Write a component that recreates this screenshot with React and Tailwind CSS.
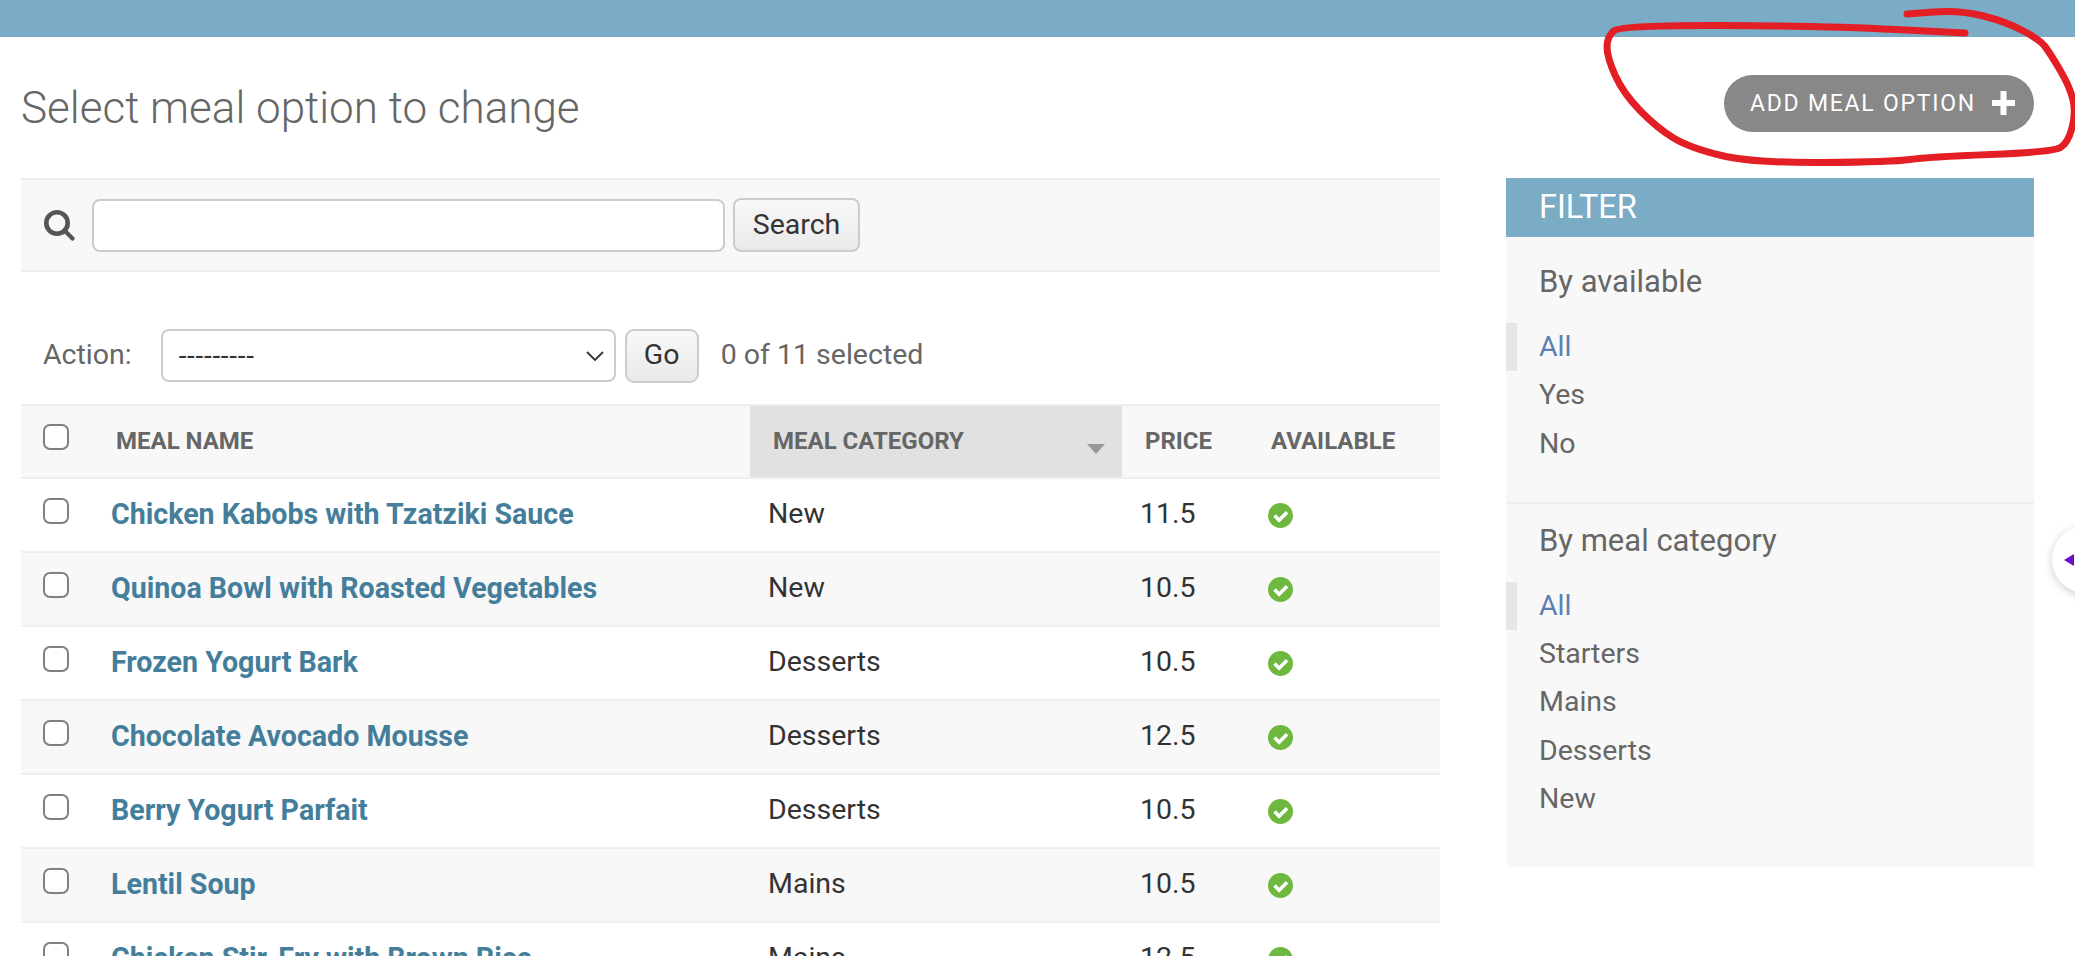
const rows = [
  ["Chicken Kabobs with Tzatziki Sauce", "New", "11.5"],
  ["Quinoa Bowl with Roasted Vegetables", "New", "10.5"],
  ["Frozen Yogurt Bark", "Desserts", "10.5"],
  ["Chocolate Avocado Mousse", "Desserts", "12.5"],
  ["Berry Yogurt Parfait", "Desserts", "10.5"],
  ["Lentil Soup", "Mains", "10.5"],
  ["Chicken Stir-Fry with Brown Rice", "Mains", "12.5"],
];

const filters = [
  { title: "By available", items: ["All", "Yes", "No"] },
  { title: "By meal category", items: ["All", "Starters", "Mains", "Desserts", "New"] },
];

function CheckIcon() {
  return (
    <svg width="25" height="25" viewBox="0 0 25 25" className="block">
      <circle cx="12.5" cy="12.5" r="12.5" fill="#6fb83f" />
      <path d="M6.5 12.6l4.6 4.6 8-8" fill="none" stroke="#fff" strokeWidth="3.6" />
    </svg>
  );
}

function Checkbox() {
  return <input type="checkbox" className="block appearance-none w-[26px] h-[26px] bg-white border-2 border-[#808080] rounded-[7px]" />;
}

function FilterGroup({ title, items, last }) {
  return (
    <div className={last ? "pt-[19px] pb-[44px]" : "pt-[27px] pb-[34px] border-b-2 border-[#eeeeee]"}>
      <h3 className="pl-[33px] text-[#666666] text-[31px] leading-[36px]">{title}</h3>
      <ul className="mt-[23px]">
        {items.map((item, i) => (
          <li
            key={item}
            className={
              i === 0
                ? "h-[48.3px] pl-[22px] border-l-[11px] border-[#e6e6e6] text-[#5b80b2] text-[28.5px] leading-[48px]"
                : "h-[48.3px] pl-[33px] text-[#666666] text-[28.5px] leading-[48px]"
            }
          >
            {item}
          </li>
        ))}
      </ul>
    </div>
  );
}

export default function App() {
  return (
    <div className="relative h-[956px] w-[2075px] overflow-hidden bg-white font-['Roboto',sans-serif] text-[#333333]">
      <div className="h-[37px] bg-[#7aacc6]" />

      <div className="flex h-[141px] items-start justify-between pl-[21px] pr-[41px]">
        <h1 className="mt-[48px] text-[44px] leading-[46px] font-light text-[#666666]">Select meal option to change</h1>
        <a className="mt-[38px] flex h-[57px] w-[310px] items-center rounded-full bg-[#888888] pl-[26px] pt-[2px] text-[23px] tracking-[1.75px] text-white">
          ADD MEAL OPTION
          <svg width="23" height="24" viewBox="0 0 23 24" className="ml-[16px] -mt-[4px]">
            <path d="M8.5 0h6v9h8.5v6h-8.5v9h-6v-9H0V9h8.5z" fill="#fff" />
          </svg>
        </a>
      </div>

      <div className="flex items-start justify-between pl-[21px] pr-[41px]">
        <div className="w-[1419px] shrink-0">
          <div className="flex h-[94px] items-center border-y-2 border-[#eeeeee] bg-[#f8f8f8] pl-[23px]">
            <svg width="31" height="31" viewBox="0 0 31 31" className="mt-[1px]">
              <circle cx="13" cy="13" r="10.7" fill="none" stroke="#555555" strokeWidth="4.6" />
              <path d="M20.5 20.5l8 8" fill="none" stroke="#555555" strokeWidth="4.2" strokeLinecap="round" />
            </svg>
            <input className="ml-[17px] h-[53px] w-[633px] rounded-[8px] border-2 border-[#cccccc] bg-white" />
            <button className="ml-[8px] h-[54px] w-[127px] rounded-[8px] border-2 border-[#cccccc] bg-gradient-to-b from-[#f8f8f8] to-[#e9e9e9] text-[28.5px] text-[#333333]">
              Search
            </button>
          </div>

          <div className="flex h-[132px] items-center pt-[35px] pl-[22px]">
            <span className="text-[28.5px] text-[#666666]">Action:</span>
            <div className="relative ml-[29px]">
              <select className="block h-[53px] w-[455px] appearance-none rounded-[8px] border-2 border-[#cccccc] bg-white pl-[16px] text-[28px] tracking-[0.7px] text-[#333333]">
                <option>---------</option>
              </select>
              <svg width="18" height="10" viewBox="0 0 18 10" className="absolute right-[12px] top-[22px]">
                <path d="M1 1l8 8 8-8" fill="none" stroke="#333333" strokeWidth="1.8" />
              </svg>
            </div>
            <button className="ml-[9px] h-[54px] w-[74px] rounded-[9px] border-2 border-[#cccccc] bg-gradient-to-b from-[#f8f8f8] to-[#e9e9e9] text-[28.5px] text-[#333333]">
              Go
            </button>
            <span className="ml-[22px] text-[28.5px] text-[#666666]">0 of 11 selected</span>
          </div>

          <table className="w-[1419px] table-fixed border-collapse">
            <colgroup>
              <col className="w-[69px]" />
              <col className="w-[660px]" />
              <col className="w-[372px]" />
              <col className="w-[128px]" />
              <col className="w-[190px]" />
            </colgroup>
            <thead>
              <tr className="h-[73px] border-y-2 border-[#eeeeee] bg-[#f8f8f8] text-left text-[24px] font-bold text-[#666666]">
                <th className="pl-[22px] align-middle">
                  <div className="-mt-[9px]"><Checkbox /></div>
                </th>
                <th className="pl-[26px] pb-[2px] font-bold">MEAL NAME</th>
                <th className="relative bg-[#e1e1e1] pl-[23px] pb-[2px] font-bold">
                  MEAL CATEGORY
                  <svg width="18" height="10" viewBox="0 0 18 10" className="absolute left-[337px] top-[38px]">
                    <path d="M0 0h18L9 10z" fill="#999999" />
                  </svg>
                </th>
                <th className="pl-[23px] pb-[2px] font-bold">PRICE</th>
                <th className="pl-[21px] pb-[2px] font-bold">AVAILABLE</th>
              </tr>
            </thead>
            <tbody>
              {rows.map((row, i) => (
                <tr key={row[0]} className={i % 2 === 0 ? "h-[74px] border-b-2 border-[#eeeeee] bg-white" : "h-[74px] border-b-2 border-[#eeeeee] bg-[#f8f8f8]"}>
                  <td className="pl-[22px]">
                    <div className="-mt-[8px]"><Checkbox /></div>
                  </td>
                  <td className="pl-[21px] pb-[2px] text-[28.6px] font-bold text-[#447e9b]">{row[0]}</td>
                  <td className="pl-[18px] pb-[2px] text-[28.5px]">{row[1]}</td>
                  <td className="pl-[18px] pb-[2px] text-[28.5px]">{row[2]}</td>
                  <td className="pl-[18px]"><CheckIcon /></td>
                </tr>
              ))}
            </tbody>
          </table>
        </div>

        <aside className="w-[528px] shrink-0 bg-[#f8f8f8]">
          <h2 className="flex h-[59px] items-center bg-[#7aacc6] pl-[33px] text-[32.5px] text-white">FILTER</h2>
          {filters.map((group, i) => (
            <FilterGroup key={group.title} title={group.title} items={group.items} last={i === filters.length - 1} />
          ))}
        </aside>
      </div>

      {/* side widget + red marker stroke sit on top of the page */}
      <div className="absolute left-[2052px] top-[526px] flex h-[67px] w-[67px] items-center rounded-full bg-white pl-[12px] shadow-[0_2px_10px_rgba(0,0,0,0.2)]">
        <svg width="10" height="12" viewBox="0 0 10 12">
          <path d="M0 6l10-6v12z" fill="#6a0dc4" />
        </svg>
      </div>
      <svg width="522" height="175" viewBox="0 0 522 175" className="pointer-events-none absolute left-[1560px] top-0">
        <path
          d="M405 33L336 29.5Q267 26 163 25.5Q60 25 53.5 31Q47 37 47 47Q47 57 55 75Q63 93 80 110.5Q97 128 113.5 138Q130 148 161.5 155.5Q193 163 263 162.5Q333 162 350 159.5Q367 157 430 154.5Q493 152 500.5 147.5Q508 143 512 128Q516 113 513 100Q510 87 500 70Q490 53 485 46.5Q480 40 463.5 31Q447 22 423.5 16Q400 10 373.5 12Q360 13 347 14"
          fill="none"
          stroke="#e31e24"
          strokeWidth="7"
          strokeLinecap="round"
          strokeLinejoin="round"
        />
      </svg>
    </div>
  );
}
